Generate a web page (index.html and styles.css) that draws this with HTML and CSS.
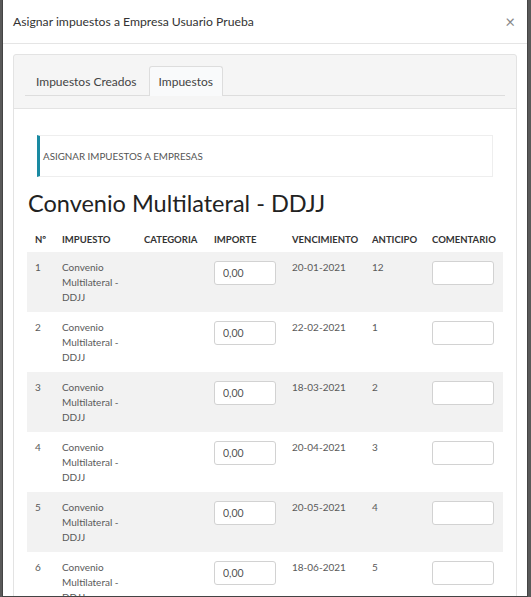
FILE: index.html
```html
<!DOCTYPE html>
<html lang="es">
<head>
<meta charset="utf-8">
<title>Asignar impuestos</title>
<link rel="stylesheet" href="styles.css">
</head>
<body>
<div class="modal">
  <div class="modal-header">
    <span class="modal-title">Asignar impuestos a Empresa Usuario Prueba</span>
    <span class="close">&times;</span>
  </div>
  <div class="modal-body">
    <div class="panel">
      <div class="panel-head">
        <ul class="tabs">
          <li class="tab">Impuestos Creados</li>
          <li class="tab active">Impuestos</li>
        </ul>
      </div>
      <div class="panel-body">
        <div class="callout">ASIGNAR IMPUESTOS A EMPRESAS</div>
        <h2 class="heading">Convenio Multilateral - DDJJ</h2>
        <table class="grid">
          <colgroup>
            <col class="c-n"><col class="c-imp"><col class="c-cat"><col class="c-amt"><col class="c-ven"><col class="c-ant"><col class="c-com">
          </colgroup>
          <thead>
            <tr><th>Nº</th><th>IMPUESTO</th><th>CATEGORIA</th><th>IMPORTE</th><th>VENCIMIENTO</th><th>ANTICIPO</th><th>COMENTARIO</th></tr>
          </thead>
          <tbody>
            <tr><td>1</td><td>Convenio Multilateral - DDJJ</td><td></td><td><input class="field" value="0,00"></td><td>20-01-2021</td><td>12</td><td><input class="field"></td></tr>
            <tr><td>2</td><td>Convenio Multilateral - DDJJ</td><td></td><td><input class="field" value="0,00"></td><td>22-02-2021</td><td>1</td><td><input class="field"></td></tr>
            <tr><td>3</td><td>Convenio Multilateral - DDJJ</td><td></td><td><input class="field" value="0,00"></td><td>18-03-2021</td><td>2</td><td><input class="field"></td></tr>
            <tr><td>4</td><td>Convenio Multilateral - DDJJ</td><td></td><td><input class="field" value="0,00"></td><td>20-04-2021</td><td>3</td><td><input class="field"></td></tr>
            <tr><td>5</td><td>Convenio Multilateral - DDJJ</td><td></td><td><input class="field" value="0,00"></td><td>20-05-2021</td><td>4</td><td><input class="field"></td></tr>
            <tr><td>6</td><td>Convenio Multilateral - DDJJ</td><td></td><td><input class="field" value="0,00"></td><td>18-06-2021</td><td>5</td><td><input class="field"></td></tr>
          </tbody>
        </table>
      </div>
    </div>
  </div>
</div>
</body>
</html>
```
FILE: styles.css
```css
html, body {
  margin: 0;
  padding: 0;
  height: 100%;
  overflow: hidden;
}
body {
  background: #595959;
  font-family: "Lato", "Open Sans", sans-serif;
  color: #555;
}
.modal {
  margin-left: 2px;
  width: 526px;
  height: 597px;
  background: #fff;
  border: 1px solid #444;
  border-top: 0;
  overflow: hidden;
  box-sizing: border-box;
}
.modal-header {
  height: 43px;
  border-bottom: 1px solid #e5e5e5;
  display: flex;
  align-items: center;
  justify-content: space-between;
  padding: 0 12px 0 10px;
}
.modal-title {
  font-size: 12.2px;
  color: #333;
}
.close {
  font-size: 17px;
  color: #888;
  line-height: 1;
}
.modal-body {
  padding: 10px;
}
.panel {
  border: 1px solid #e3e3e3;
  border-radius: 3px;
  background: #f5f5f5;
}
.panel-head {
  padding: 11px 11px 12px;
}
.tabs {
  list-style: none;
  margin: 0;
  padding: 0;
  display: flex;
  border-bottom: 1px solid #ddd;
}
.tab {
  font-size: 12px;
  color: #444;
  padding: 0 11px;
  height: 28px;
  line-height: 29px;
  border: 1px solid transparent;
  border-bottom: 0;
  margin-bottom: -1px;
  border-radius: 3px 3px 0 0;
}
.tab:first-child {
  padding: 0 11px 0 10px;
}
.tab.active {
  background: #f9fafb;
  border-color: #ddd;
  height: 29px;
  padding: 0 9px;
}
.panel-body {
  background: #fff;
  border-top: 1px solid #e3e3e3;
  padding: 26px 13px 14px;
}
.callout {
  margin: 0 10px;
  border: 1px solid #eee;
  border-left: 3px solid #1a8aa2;
  height: 40px;
  line-height: 40px;
  padding-left: 3px;
  font-size: 9.8px;
  color: #555;
}
.heading {
  margin: 12px 0 10px 1px;
  font-size: 23.5px;
  font-weight: 400;
  color: #222;
  line-height: 29px;
}
.grid {
  width: 476px;
  border-collapse: collapse;
  table-layout: fixed;
}
.c-n { width: 27px; }
.c-imp { width: 82px; }
.c-cat { width: 70px; }
.c-amt { width: 78px; }
.c-ven { width: 80px; }
.c-ant { width: 60px; }
.c-com { width: 79px; }
.grid th {
  font-size: 9.5px;
  font-weight: 700;
  color: #333;
  text-align: left;
  padding: 5px 0 6px 8px;
  line-height: 13px;
  white-space: nowrap;
}
.grid td {
  font-size: 10px;
  line-height: 15px;
  padding: 8px 0 7px 8px;
  vertical-align: top;
  height: 45px;
  color: #5a5a5a;
}
.grid tbody tr:nth-child(odd) td {
  background: #f2f2f2;
}
.field {
  display: block;
  box-sizing: border-box;
  width: 62px;
  height: 24px;
  margin: 1px 0 0;
  border: 1px solid #d2d2d2;
  border-radius: 3px;
  padding: 0 8px;
  font-family: inherit;
  font-size: 10.5px;
  color: #555;
  background: #fff;
}
```
